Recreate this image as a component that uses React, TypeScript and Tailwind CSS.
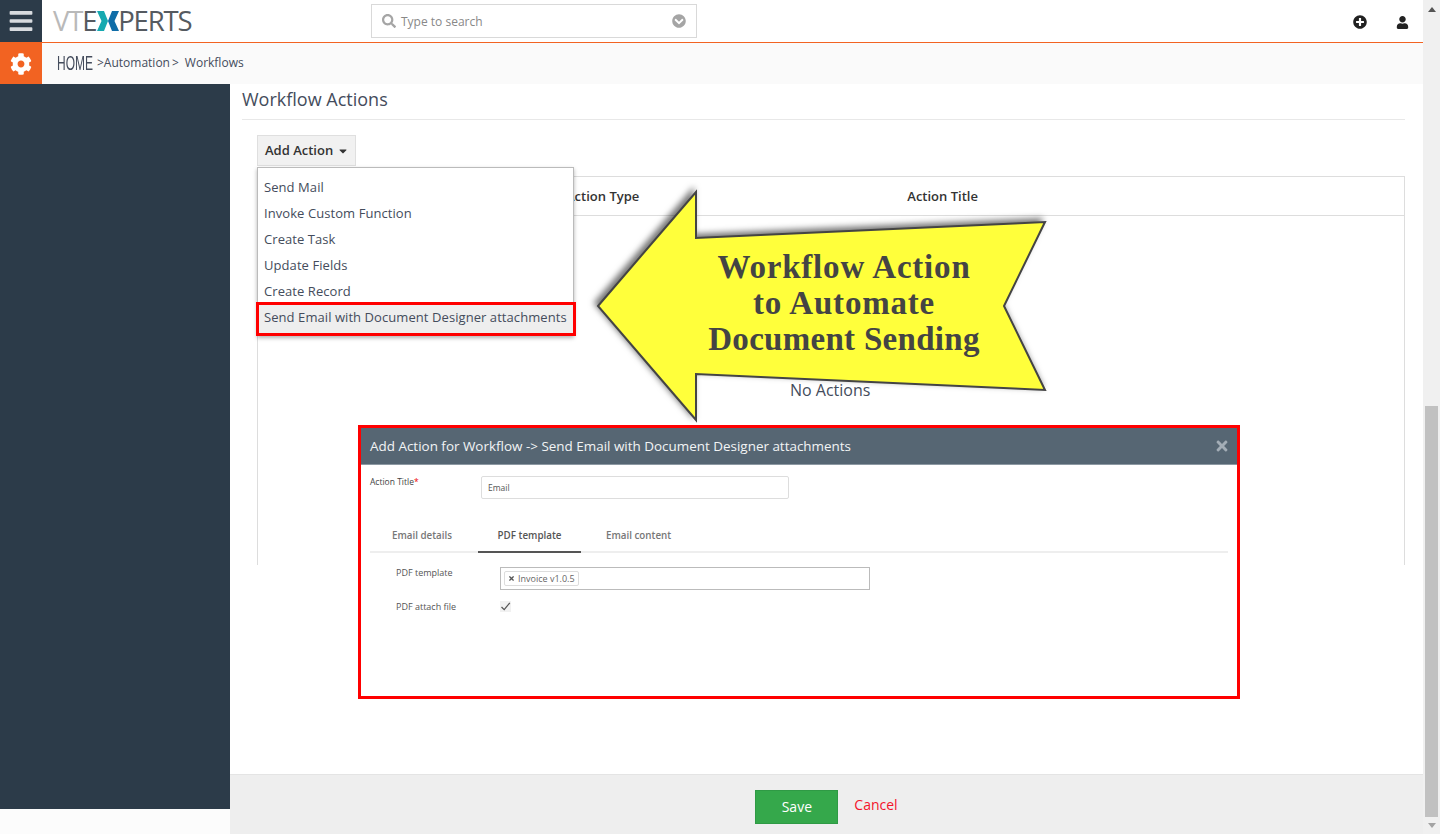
import React from "react";
import { FaBars, FaCog, FaSearch, FaChevronCircleDown, FaPlusCircle, FaUser, FaCaretDown, FaTimes } from "react-icons/fa";

function Logo() {
  return (
    <div className="flex items-center h-[42px] ml-[11px] font-['Open_Sans',sans-serif] font-light text-[27.5px] leading-none tracking-[-1.2px]">
      <span className="text-[#b9b9b9] font-normal">VT</span>
      <span className="text-[#555a60] font-normal">E</span>
      <svg width="22" height="20" viewBox="0 0 22 20" className="ml-[1px] mr-[-1px]">
        <polygon points="0,0 7,0 11,10 7,20 0,20 4.5,10" fill="#16a9b0" />
        <polygon points="22,0 15,0 11,10 15,20 22,20 17.5,10" fill="#0f6da8" />
      </svg>
      <span className="text-[#555a60] font-normal">PERTS</span>
    </div>
  );
}

const menu = ["Send Mail", "Invoke Custom Function", "Create Task", "Update Fields", "Create Record"];

function Arrow() {
  return (
    <div className="absolute left-[590px] top-[185px] w-[460px] h-[240px]">
      <svg width="460" height="240" viewBox="590 185 460 240" className="drop-shadow-[-3px_-3px_3px_rgba(0,0,0,0.55)]">
        <polygon
          points="598,306 696,192 696,238 1045,222 1004,306 1045,390 696,374 696,420"
          fill="#ffff3b"
          stroke="#444444"
          strokeWidth="2"
        />
      </svg>
      <div className="absolute left-[84px] top-[64px] w-[340px] text-center whitespace-nowrap font-['Liberation_Serif',serif] font-bold text-[33px] leading-[36px] tracking-[0.8px] text-[#444444]">
        <div>Workflow Action</div>
        <div>to Automate</div>
        <div className="tracking-[0.3px]">Document Sending</div>
      </div>
    </div>
  );
}

function ModalPicture() {
  return (
    <div className="absolute left-[358px] top-[425px] w-[882px] h-[274px] border-[3px] border-[#ff0000] bg-white font-['Open_Sans',sans-serif] text-[#555]">
      <div className="h-[37px] bg-[#566673] border-b border-[#8d99a3] flex items-center justify-between pl-[9px] pr-[7px]">
        <span className="text-[13.45px] text-[#f2f4f5]">Add Action for Workflow -&gt; Send Email with Document Designer attachments</span>
        <FaTimes className="text-[#a3adb6] text-[16px]" />
      </div>
      <div className="flex items-start pl-[9px] pt-[11px]">
        <span className="w-[111px] text-[8.5px] leading-[12px] text-[#444]">Action Title<span className="text-[#e00]">*</span></span>
        <div className="w-[308px] h-[23px] border border-[#ddd] rounded-[2px] flex items-center pl-[6px] pt-[2px] text-[8.5px] text-[#555]">Email</div>
      </div>
      <div className="mx-[9px] mt-[24px] h-[30px] border-b-2 border-[#eee] flex text-[9.8px] font-semibold text-[#777]">
        <div className="w-[108px] h-[26px] flex items-center pl-[22px]">Email details</div>
        <div className="w-[103px] h-[30px] pt-[6px] text-center border-b-2 border-[#555] text-[#555]">PDF template</div>
        <div className="h-[26px] flex items-center pl-[25px]">Email content</div>
      </div>
      <div className="flex items-start mt-[14px] pl-[35px]">
        <span className="w-[104px] text-[9px] leading-[12px] text-[#555]">PDF template</span>
        <div className="w-[370px] h-[23px] border border-[#bbb] flex items-center pl-[3px]">
          <div className="h-[15px] border border-[#ddd] rounded-[2px] flex items-center gap-[3px] px-[3px] text-[9px] text-[#666] whitespace-nowrap">
            <FaTimes className="text-[7px] text-[#555]" />
            <span>Invoice v1.0.5</span>
          </div>
        </div>
      </div>
      <div className="flex items-center mt-[10px] pl-[35px]">
        <span className="w-[104px] text-[9px] text-[#555]">PDF attach file</span>
        <div className="w-[11px] h-[11px] bg-[#f1f1f1] flex items-center justify-center">
          <svg width="11" height="11" viewBox="0 0 11 11">
            <polyline points="1.5,6 4.2,8.6 9.8,1.8" fill="none" stroke="#555" strokeWidth="1.3" />
          </svg>
        </div>
      </div>
    </div>
  );
}

export default function App() {
  return (
    <div className="relative w-[1440px] h-[834px] overflow-hidden flex bg-white font-['Open_Sans',sans-serif]">
      <div className="w-[1423px] h-full flex flex-col">
        {/* top bar */}
        <div className="h-[43px] flex border-b border-[#f26322] bg-white shrink-0">
          <div className="w-[42px] h-[42px] bg-[#2c3b49] flex items-center justify-center">
            <FaBars className="text-[#d8dbdf] text-[26px]" />
          </div>
          <div className="w-[329px] shrink-0">
            <Logo />
          </div>
          <div className="mt-[4px] w-[326px] h-[34px] border border-[#d9d9d9] flex items-center pl-[10px] pr-[10px]">
            <FaSearch className="text-[#a5a5a5] text-[14px]" />
            <span className="ml-[5px] text-[12px] pt-[1px] text-[#888]">Type to search</span>
            <FaChevronCircleDown className="ml-auto text-[#a5a5a5] text-[14px]" />
          </div>
          <div className="ml-auto flex items-center pr-[14px] text-[#222] text-[13px] h-[44px]">
            <FaPlusCircle className="text-[14px]" />
            <FaUser className="ml-[29px] text-[13px]" />
          </div>
        </div>
        {/* breadcrumb */}
        <div className="h-[41px] flex bg-[#fafafa] shrink-0">
          <div className="w-[42px] h-full bg-[#f26322] flex items-center justify-center">
            <FaCog className="text-white text-[22px]" />
          </div>
          <div className="flex items-center ml-[15px] pb-[2px] text-[12px] text-[#444c5c]">
            <span className="w-[35px] text-[20px] font-['Liberation_Sans',sans-serif] scale-x-[0.6] origin-left">HOME</span>
            <span className="ml-[5px]">&gt;Automation</span>
            <span className="ml-[2px]">&gt;</span>
            <span className="ml-[6px]">Workflows</span>
          </div>
        </div>
        {/* body */}
        <div className="flex-1 flex min-h-0">
          <div className="w-[230px] h-full flex flex-col shrink-0">
            <div className="flex-1 bg-[#2c3b49]" />
            <div className="h-[25px] bg-[#fcfcfc]" />
          </div>
          <div className="flex-1 flex flex-col min-w-0">
            <div className="flex-1 pl-[12px] pr-[18px] min-h-0">
              <div className="h-[36px] border-b border-[#e8e8e8] text-[18px] leading-[30px] text-[#444c5c]">Workflow Actions</div>
              <div className="relative ml-[15px] mt-[15px] w-[99px]">
                <div className="h-[31px] w-[99px] bg-[#f1f1f1] border border-[#dfdfdf] flex items-center pl-[7px] text-[13px] font-semibold text-[#333]">
                  Add Action
                  <FaCaretDown className="ml-[4px] text-[12px] text-[#333]" />
                </div>
                <div className="absolute z-10 left-0 top-[32px] w-[317px] bg-white border border-[#bbb] border-b-0 pt-[7px] shadow-[0_2px_4px_rgba(0,0,0,0.3)] text-[13px] tracking-[0.07px] text-[#444c5c]">
                  {menu.map((m) => (
                    <div key={m} className="h-[26px] flex items-center pl-[6px]">{m}</div>
                  ))}
                  <div className="h-[34px] -ml-[2px] -mr-[3px] -mt-[3px] border-[3px] border-[#ff0000] bg-[#eeeeee] flex items-center pl-[5px] pb-[2px] whitespace-nowrap">
                    Send Email with Document Designer attachments
                  </div>
                </div>
              </div>
              <div className="ml-[15px] mt-[10px] h-[389px] w-[1148px] border-x border-[#ddd]">
                <div className="h-[40px] border-y border-[#ddd] flex items-center pt-[1px] text-[13px] font-semibold text-[#333]">
                  <span className="ml-[308px] whitespace-nowrap">Action Type</span>
                  <span className="ml-[268px] whitespace-nowrap">Action Title</span>
                </div>
                <div className="pt-[163px] pl-[532px] text-[16px] leading-[22px] text-[#444c5c]">No Actions</div>
              </div>
            </div>
            <div className="h-[60px] bg-[#eeeeee] border-t border-[#e4e4e4] flex items-start justify-center shrink-0">
              <div className="mt-[15px] w-[83px] h-[34px] bg-[#35a84b] border border-[#2f9a45] flex items-center justify-center pb-[1px] text-[14px] text-white">Save</div>
              <div className="ml-[16px] mt-[19px] text-[14px] text-[#f4142c] leading-[22px]">Cancel</div>
            </div>
          </div>
        </div>
      </div>
      {/* scrollbar */}
      <div className="w-[17px] h-full bg-[#f0f0f0] flex flex-col items-center shrink-0">
        <div className="mt-[7px] w-0 h-0 border-x-[4px] border-x-transparent border-b-[5px] border-b-[#555]" />
        <div className="mt-[394px] w-[13px] h-[411px] bg-[#c1c1c1]" />
        <div className="mt-[6px] w-0 h-0 border-x-[4px] border-x-transparent border-t-[5px] border-t-[#a3a3a3]" />
      </div>
      <Arrow />
      <ModalPicture />
    </div>
  );
}
